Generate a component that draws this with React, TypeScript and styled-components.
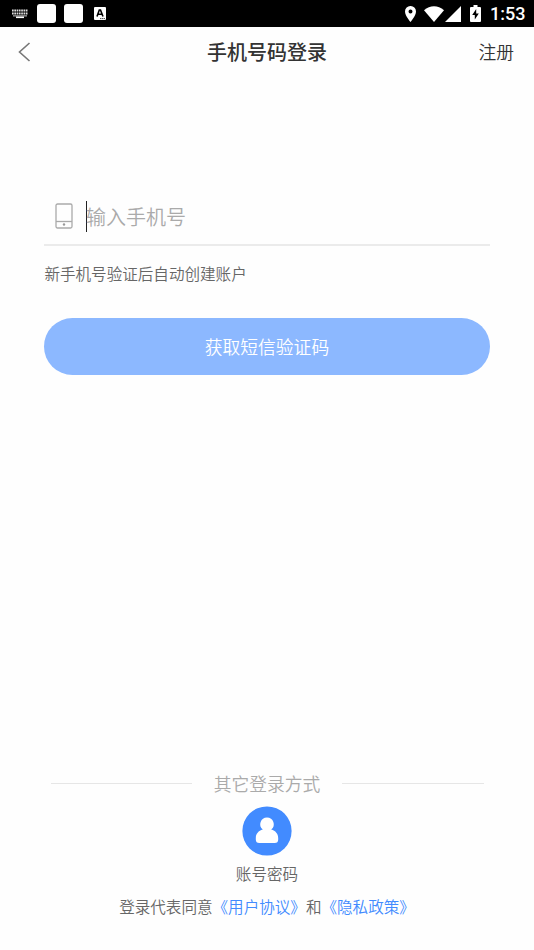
import React from "react";
import styled, { createGlobalStyle } from "styled-components";

const GlobalStyle = createGlobalStyle`
  * { box-sizing: border-box; }
  body {
    margin: 0;
    background: #fefefe;
    font-family: Roboto, "Noto Sans CJK SC", sans-serif;
    font-weight: 350;
    color: #333;
  }
`;

const Screen = styled.div`
  width: 534px;
  height: 950px;
  display: flex;
  flex-direction: column;
  background: #fefefe;
  overflow: hidden;
`;

const StatusBar = styled.div`
  height: 27px;
  flex: none;
  background: #000;
  color: #fff;
  display: flex;
  align-items: center;
  justify-content: space-between;
  padding: 0 9px 0 12px;
`;

const StatusGroup = styled.div`
  display: flex;
  align-items: center;
`;

const AppBadge = styled.span<{ $gap: number }>`
  width: 19px;
  height: 19px;
  border-radius: 3px;
  background: #fff;
  margin-left: ${(p) => p.$gap}px;
`;

const StatusIcon = styled.svg<{ $gap?: number }>`
  display: block;
  flex: none;
  margin-left: ${(p) => p.$gap ?? 0}px;
`;

const Clock = styled.span`
  width: 35px;
  margin-left: 9px;
  font-size: 18px;
  line-height: 27px;
  font-weight: 500;
  white-space: nowrap;
`;

const NavBar = styled.header`
  height: 52px;
  flex: none;
  display: grid;
  grid-template-columns: 100px 1fr 100px;
  align-items: center;
  padding: 0 20px 0 20px;
`;

const BackButton = styled.button`
  border: 0;
  padding: 0;
  background: none;
  width: 14px;
  height: 20px;
  margin: -2px 0 0 -3px;
  svg {
    display: block;
  }
`;

const Title = styled.h1`
  margin: 0;
  text-align: center;
  font-size: 20px;
  line-height: 30px;
  font-weight: 500;
`;

const RegisterLink = styled.a`
  text-align: right;
  font-size: 17.8px;
  line-height: 26px;
`;

const Form = styled.main`
  margin: 109px 44.5px 0 44.4px;
  display: flex;
  flex-direction: column;
`;

const PhoneField = styled.div`
  height: 58px;
  border-bottom: 2px solid #ebebeb;
  display: flex;
  align-items: center;
  padding: 0 0 0 10.5px;
`;

const Caret = styled.span`
  width: 1px;
  height: 31px;
  margin-left: 13px;
  background: #222;
`;

const Placeholder = styled.span`
  margin-left: -1px;
  padding-top: 4px;
  font-size: 20px;
  line-height: 30px;
  color: #aaa;
`;

const Hint = styled.p`
  margin: 17px 0 0;
  font-size: 15.57px;
  line-height: 24px;
  color: #666;
`;

const SubmitButton = styled.button`
  height: 57px;
  margin-top: 31px;
  padding: 0 0 2px;
  border: 0;
  border-radius: 29px;
  background: #8cb8ff;
  color: #fff;
  font-family: inherit;
  font-weight: inherit;
  font-size: 17.8px;
`;

const Footer = styled.footer`
  margin-top: auto;
  padding-bottom: 30px;
  display: flex;
  flex-direction: column;
  align-items: center;
`;

const Divider = styled.div`
  width: 433px;
  height: 26px;
  display: flex;
  align-items: center;
  gap: 22px;
  color: #aaa;
  font-size: 17.8px;
  line-height: 26px;
  &::before,
  &::after {
    content: "";
    flex: 1;
    height: 1px;
    background: #e6e6e6;
  }
`;

const DividerLabel = styled.span`
  padding-top: 4px;
`;

const AccountIcon = styled.svg`
  display: block;
  margin-top: 10px;
`;

const FooterText = styled.p<{ $top: number }>`
  margin: ${(p) => p.$top}px 0 0;
  font-size: 15.57px;
  line-height: 24px;
  color: #666;
  white-space: nowrap;
`;

const Policy = styled.a`
  color: #428bff;
`;

export default function App() {
  return (
    <Screen>
      <GlobalStyle />
      <StatusBar>
        <StatusGroup>
          <StatusIcon width="16" height="10" viewBox="0 0 16 10">
            <path d="M0 1.5h16M0 4.5h16" stroke="#ddd" strokeWidth="2" strokeDasharray="1.7 .6" />
            <path d="M1 6.9h14" stroke="#ccc" strokeWidth="1" />
            <path d="M4 8.3h8" stroke="#fff" strokeWidth="1.6" />
          </StatusIcon>
          <AppBadge $gap={9} />
          <AppBadge $gap={8} />
          <StatusIcon $gap={11} width="12" height="13" viewBox="0 0 12 13">
            <rect width="12" height="13" rx="1" fill="#fff" />
            <path d="M3 9.5 5.3 3h1.2L9 9.5M4 7.3h4" fill="none" stroke="#000" strokeWidth="1.6" />
            <path d="M6 11.6h5" stroke="#222" strokeWidth=".8" strokeDasharray="1.5 .5" />
          </StatusIcon>
        </StatusGroup>
        <StatusGroup>
          <StatusIcon width="11" height="16" viewBox="0 0 11 16">
            <path d="M5.5 0A5.4 5.4 0 0 0 0 5.4C0 9.5 5.5 16 5.5 16S11 9.5 11 5.4A5.4 5.4 0 0 0 5.5 0Zm0 3.5a2 2 0 1 1 0 4 2 2 0 0 1 0-4Z" fill="#fff" fillRule="evenodd" />
          </StatusIcon>
          <StatusIcon $gap={8} width="20" height="16" viewBox="0 0 20 16">
            <path d="M0 4.2C6-1.1 14-1.1 20 4.2L10 16Z" fill="#fff" />
          </StatusIcon>
          <StatusIcon $gap={1} width="16" height="16" viewBox="0 0 16 16">
            <path d="M16 0v16H0Z" fill="#fff" />
          </StatusIcon>
          <StatusIcon $gap={9} width="11" height="17" viewBox="0 0 11 17">
            <path d="M3.5 0h4v2H10q1 0 1 1v13q0 1-1 1H1q-1 0-1-1V3q0-1 1-1h2.5Z" fill="#fff" />
            <path d="M6.2 4 2.2 10h2.6v4.5L8.8 8.5H6.2Z" fill="#000" />
          </StatusIcon>
          <Clock>1:53</Clock>
        </StatusGroup>
      </StatusBar>
      <NavBar>
        <BackButton aria-label="返回">
          <svg width="14" height="20" viewBox="0 0 14 20" fill="none" stroke="#777" strokeWidth="1.6">
            <path d="M12.5 1 2.5 10l10 9" />
          </svg>
        </BackButton>
        <Title>手机号码登录</Title>
        <RegisterLink>注册</RegisterLink>
      </NavBar>
      <Form>
        <PhoneField>
          <svg width="18" height="26" viewBox="0 0 18 26" fill="none" stroke="#aaa" strokeWidth="1.3">
            <rect x="1" y="1" width="16" height="24" rx="1.5" />
            <path d="M1 18.5h16" />
            <circle cx="9" cy="21.5" r="1.2" fill="#999" stroke="none" />
          </svg>
          <Caret />
          <Placeholder>输入手机号</Placeholder>
        </PhoneField>
        <Hint>新手机号验证后自动创建账户</Hint>
        <SubmitButton>获取短信验证码</SubmitButton>
      </Form>
      <Footer>
        <Divider>
          <DividerLabel>其它登录方式</DividerLabel>
        </Divider>
        <AccountIcon width="50" height="50" viewBox="0 0 50 50">
          <circle cx="25" cy="25" r="24.6" fill="#428bff" />
          <path d="M25 11.5a6.8 6.8 0 0 0-4.2 12.1c-4.3 1.2-7 4.3-7 8.6v1.3q0 3.5 3.5 3.5h15.4q3.5 0 3.5-3.5v-1.3c0-4.3-2.7-7.4-7-8.6A6.8 6.8 0 0 0 25 11.5Z" fill="#fff" />
        </AccountIcon>
        <FooterText $top={7}>账号密码</FooterText>
        <FooterText $top={9}>
          登录代表同意<Policy>《用户协议》</Policy>和<Policy>《隐私政策》</Policy>
        </FooterText>
      </Footer>
    </Screen>
  );
}
